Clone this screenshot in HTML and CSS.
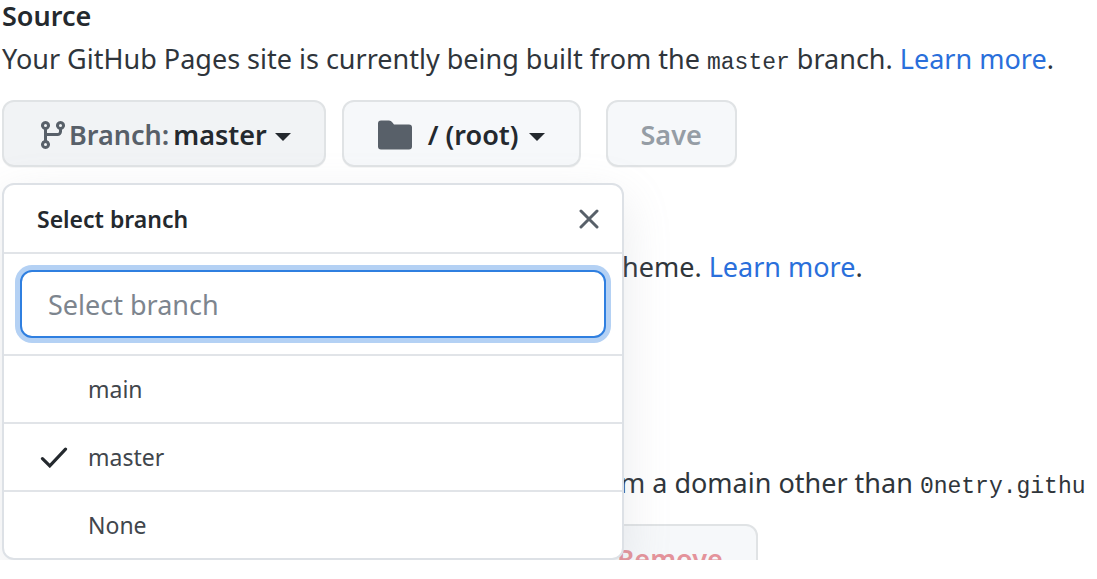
FILE: index.html
```html
<!DOCTYPE html>
<html lang="en">
<head>
<meta charset="utf-8">
<meta name="viewport" content="width=device-width, initial-scale=1">
<title>GitHub Pages source</title>
<link rel="stylesheet" href="styles.css">
</head>
<body>
<main class="settings">
  <h1 class="heading">Source</h1>
  <p class="note">Your GitHub Pages site is currently being built from the <code>master</code> branch. <a href="#">Learn more</a>.</p>

  <div class="source">
    <button type="button" class="btn btn-branch" aria-expanded="true">
      <svg class="icon-branch" viewBox="0 0 16 16" aria-hidden="true"><path fill-rule="evenodd" d="M5 3.25a.75.75 0 11-1.5 0 .75.75 0 011.5 0zm0 2.122a2.25 2.25 0 10-1.5 0v5.256a2.25 2.25 0 101.5 0V8.5h5.25a2.25 2.25 0 002.25-2.25v-.878a2.25 2.25 0 10-1.5 0v.878a.75.75 0 01-.75.75H5V5.372zm0 7.378a.75.75 0 11-1.5 0 .75.75 0 011.5 0zm6.75-8.75a.75.75 0 100-1.5.75.75 0 000 1.5z"/></svg>
      <span class="btn-label">Branch:</span>
      <span class="btn-value">master</span>
      <span class="caret"></span>
    </button>
    <button type="button" class="btn btn-folder">
      <svg class="icon-folder" viewBox="0 0 34 30" aria-hidden="true"><path d="M3 0.500h8q2 0 3 1.500l2 2.500h15a3 3 0 0 1 3 3v19a3 3 0 0 1-3 3H3a3 3 0 0 1-3-3V3.500a3 3 0 0 1 3-3z"/></svg>
      <span class="btn-value">/ (root)</span>
      <span class="caret"></span>
    </button>
    <button type="button" class="btn btn-save" disabled>Save</button>

    <div class="menu" role="dialog" aria-labelledby="menu-title">
      <div class="menu-header">
        <h2 class="menu-title" id="menu-title">Select branch</h2>
        <button type="button" class="close" aria-label="Close">
          <svg viewBox="0 0 20 20" aria-hidden="true"><path d="M2 2l16 16M18 2L2 18"/></svg>
        </button>
      </div>
      <div class="menu-filter">
        <input class="filter" type="text" placeholder="Select branch" aria-label="Select branch">
      </div>
      <button type="button" class="item"><span class="item-mark"></span>main</button>
      <button type="button" class="item"><span class="item-mark"><svg viewBox="0 0 26 20" aria-hidden="true"><path d="M2 11l7 7L24 2"/></svg></span>master</button>
      <button type="button" class="item"><span class="item-mark"></span>None</button>
    </div>
  </div>

  <p class="note note-theme">heme. <a href="#">Learn more</a>.</p>
  <p class="note note-domain">m a domain other than <code>0netry.githu</code></p>
  <button type="button" class="btn btn-remove" disabled>Remove</button>
</main>
</body>
</html>
```
FILE: styles.css
```css
* {
  box-sizing: border-box;
}

body {
  margin: 0;
  background: #fff;
  color: #24292e;
  font-family: "Noto Sans", "Open Sans", sans-serif;
  font-size: 27px;
}

button,
input {
  margin: 0;
  font: inherit;
}

.settings {
  height: calc(100vh - 19px);
  overflow: hidden;
  padding-left: 2px;
}

.heading {
  margin: 0;
  font-size: 27px;
  font-weight: 600;
  line-height: 32px;
}

.note {
  margin: 6px 0 0;
  color: #2f353b;
  line-height: 42px;
  white-space: nowrap;
}

.note a {
  color: #2a6fdb;
  text-decoration: none;
}

.note code {
  font-family: "Liberation Mono", monospace;
  font-size: 23px;
  line-height: 1;
}

.source {
  position: relative;
  display: flex;
  margin-top: 20px;
}

.btn {
  display: flex;
  align-items: center;
  height: 67px;
  padding: 2px 33px 0;
  border: 2px solid #e0e3e5;
  border-radius: 12px;
  background: #f6f8fa;
  box-shadow: 0 1px 0 rgba(27, 31, 35, 0.04);
  color: #24292e;
  font-weight: 600;
  white-space: nowrap;
}

.btn-branch {
  margin-right: 16px;
  background: #f1f3f5;
}

.btn-folder {
  margin-right: 25px;
  padding: 2px 34px 0;
}

.btn-save {
  color: #959da5;
}

.btn-label {
  margin-right: 4px;
  color: #586069;
}

.icon-branch {
  width: 32px;
  height: 32px;
  fill: #586069;
}

.icon-folder {
  width: 34px;
  height: 30px;
  margin-right: 16px;
  fill: #586069;
}

.caret {
  margin-top: 4px;
  margin-left: 8px;
  border: 8px solid transparent;
  border-top-color: currentColor;
  border-bottom-width: 0;
}

.btn-folder .caret {
  margin-left: 10px;
}

.menu {
  position: absolute;
  top: 83px;
  left: 0;
  width: 622px;
  border: 2px solid #dde1e6;
  border-radius: 12px;
  background: #fff;
  box-shadow: 0 16px 48px rgba(149, 157, 165, 0.2);
  font-size: 23px;
}

.menu-header {
  display: flex;
  align-items: center;
  justify-content: space-between;
  height: 67px;
  padding: 0 23px 0 33px;
}

.menu-title {
  margin: 0;
  font-size: 23px;
  font-weight: 600;
}

.close {
  display: flex;
  padding: 0;
  border: 0;
  background: none;
}

.close svg {
  width: 20px;
  height: 20px;
  fill: none;
  stroke: #586069;
  stroke-width: 3;
  stroke-linecap: round;
}

.menu-filter {
  padding: 16px;
  border-top: 2px solid #e1e4e8;
}

.filter {
  display: block;
  width: 100%;
  height: 68px;
  padding: 0 26px;
  border: 2px solid #2f7fe0;
  border-radius: 12px;
  outline: 0;
  background: #fff;
  box-shadow: 0 0 0 5px #b4d1f4;
  color: #24292e;
  font-size: 27px;
}

.filter::placeholder {
  color: #7d858e;
  opacity: 1;
}

.item {
  display: flex;
  align-items: center;
  width: 100%;
  height: 68px;
  padding: 0 36px;
  border: 0;
  border-top: 2px solid #e1e4e8;
  background: none;
  color: #41464c;
  text-align: left;
}

.item-mark {
  display: flex;
  width: 48px;
}

.item-mark svg {
  width: 28px;
  height: 21px;
  fill: none;
  stroke: #24292e;
  stroke-width: 3;
  stroke-linecap: round;
}

.note-theme {
  margin-top: 79px;
  padding-left: 620px;
}

.note-domain {
  margin-top: 174px;
  padding-left: 618px;
}

.btn-remove {
  margin-top: 20px;
  margin-left: 580px;
  color: #e4939b;
}
```
